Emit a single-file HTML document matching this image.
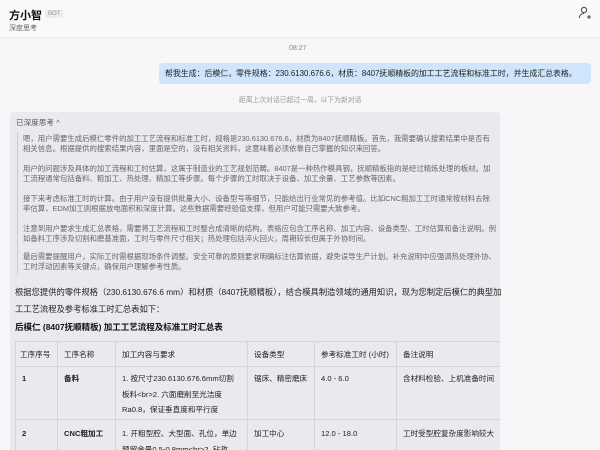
<!DOCTYPE html>
<html><head><meta charset="utf-8"><style>
*{margin:0;padding:0;box-sizing:border-box}
body{width:600px;height:450px;overflow:hidden;background:#f7f7f9;font-family:"Liberation Sans","Noto Sans CJK SC",sans-serif;position:relative;color:#222}
.a{position:absolute;white-space:nowrap}
.hdr{position:absolute;left:0;top:0;width:600px;height:38px;background:#f9f9fb;border-bottom:1px solid #e8e8ec}
.th{font-size:7.4px;color:#666;line-height:10px}
table{white-space:normal}
td,th{border:1px solid #d4d5d9;font-size:7.6px;vertical-align:top;padding:0 6px;text-align:left;font-weight:normal;line-height:15.5px;white-space:normal;overflow-wrap:anywhere}
th{white-space:nowrap;overflow:hidden}
</style></head><body>
<div class="hdr"></div>
<div class="a" style="left:9px;top:7px;font-size:11px;font-weight:bold;color:#111">方小智</div>
<div class="a" style="left:45px;top:10px;font-size:6px;color:#999;background:#ececef;padding:1px 3px">BOT</div>
<div class="a" style="left:9px;top:23px;font-size:7px;color:#666">深度思考</div>
<svg class="a" style="left:578px;top:6px" width="14" height="14" viewBox="0 0 14 14" fill="none" stroke="#444" stroke-width="1"><circle cx="6" cy="4" r="2.6"/><path d="M1.5 12c0-3 2-4.5 4.5-4.5M9 11h4M11 9v4"/></svg>
<div class="a" style="left:289px;top:45px;font-size:7px;color:#888">08:27</div>
<div class="a" style="left:159px;top:63px;width:432px;height:21px;background:#cfe5fb;border-radius:4px;font-size:7.9px;line-height:21px;padding-left:6px;color:#222">帮我生成：后模仁，零件规格：230.6130.676.6，材质：8407抚顺精板的加工工艺流程和标准工时，并生成汇总表格。</div>
<div class="a" style="left:239px;top:94px;font-size:6.8px;color:#999">距离上次对话已超过一周，以下为新对话</div>
<div class="a" style="left:10px;top:112px;width:490px;height:338px;background:#e9eaed;border-radius:4px 4px 0 0"></div>
<div class="a" style="left:16px;top:117px;font-size:7.6px;color:#555">已深度思考 ^</div>
<div class="a" style="left:17px;top:132px;width:1px;height:143px;background:#c9cace"></div>
<div class="a th" style="left:23px;top:134px">嗯，用户需要生成后模仁零件的加工工艺流程和标准工时，规格是230.6130.676.6，材质为8407抚顺精板。首先，我需要确认搜索结果中是否有<br>相关信息。根据提供的搜索结果内容，里面是空的，没有相关资料，这意味着必须依靠自己掌握的知识来回答。</div>
<div class="a th" style="left:23px;top:164px">用户的问题涉及具体的加工流程和工时估算，这属于制造业的工艺规划范畴。8407是一种热作模具钢，抚顺精板指的是经过精炼处理的板材。加<br>工流程通常包括备料、粗加工、热处理、精加工等步骤。每个步骤的工时取决于设备、加工余量、工艺参数等因素。</div>
<div class="a th" style="left:23px;top:194px">接下来考虑标准工时的计算。由于用户没有提供批量大小、设备型号等细节，只能给出行业常见的参考值。比如CNC粗加工工时通常按材料去除<br>率估算，EDM加工则根据放电面积和深度计算。这些数据需要经验值支撑，但用户可能只需要大致参考。</div>
<div class="a th" style="left:23px;top:224px">注意到用户要求生成汇总表格，需要将工艺流程和工时整合成清晰的结构。表格应包含工序名称、加工内容、设备类型、工时估算和备注说明。例<br>如备料工序涉及切割和磨基准面，工时与零件尺寸相关；热处理包括淬火回火，周期较长但属于外协时间。</div>
<div class="a th" style="left:23px;top:252px">最后需要提醒用户，实际工时需根据现场条件调整。安全可靠的原则要求明确标注估算依据，避免误导生产计划。补充说明中应强调热处理外协、<br>工时浮动因素等关键点，确保用户理解参考性质。</div>
<div class="a" style="left:15px;top:284px;font-size:8.3px;line-height:17px;color:#222">根据您提供的零件规格（230.6130.676.6 mm）和材质（8407抚顺精板），结合模具制造领域的通用知识，现为您制定后模仁的典型加<br>工工艺流程及参考标准工时汇总表如下：</div>
<div class="a" style="left:15px;top:321px;font-size:8.5px;font-weight:bold;color:#111">后模仁 (8407抚顺精板) 加工工艺流程及标准工时汇总表</div>
<div class="a" style="left:15px;top:341px;width:485px;height:109px;overflow:hidden;white-space:normal">
<table style="border-collapse:collapse;width:560px;table-layout:fixed">
<colgroup><col style="width:42px"><col style="width:58px"><col style="width:132px"><col style="width:67px"><col style="width:82px"><col style="width:179px"></colgroup>
<tr style="height:25px"><th style="padding-top:5px;padding:5px 4px 0">工序序号</th><th style="padding-top:5px">工序名称</th><th style="padding-top:5px">加工内容与要求</th><th style="padding-top:5px">设备类型</th><th style="padding-top:5px">参考标准工时 (小时)</th><th style="padding-top:5px">备注说明</th></tr>
<tr style="height:53px"><td style="padding-top:4px;font-weight:bold">1</td><td style="padding-top:4px;font-weight:bold">备料</td><td style="padding-top:4px">1. 按尺寸230.6130.676.6mm切割板料&lt;br&gt;2. 六面磨削至光洁度Ra0.8，保证垂直度和平行度</td><td style="padding-top:4px">锯床、精密磨床</td><td style="padding-top:4px">4.0 - 6.0</td><td style="padding-top:4px">含材料检验、上机准备时间</td></tr>
<tr style="height:40px"><td style="padding-top:6px;font-weight:bold">2</td><td style="padding-top:6px;font-weight:bold">CNC粗加工</td><td style="padding-top:6px">1. 开粗型腔、大型面、孔位，单边预留余量0.5-0.8mm&lt;br&gt;2. 钻孜</td><td style="padding-top:6px">加工中心</td><td style="padding-top:6px">12.0 - 18.0</td><td style="padding-top:6px">工时受型腔复杂度影响较大</td></tr>
</table></div>
</body></html>
